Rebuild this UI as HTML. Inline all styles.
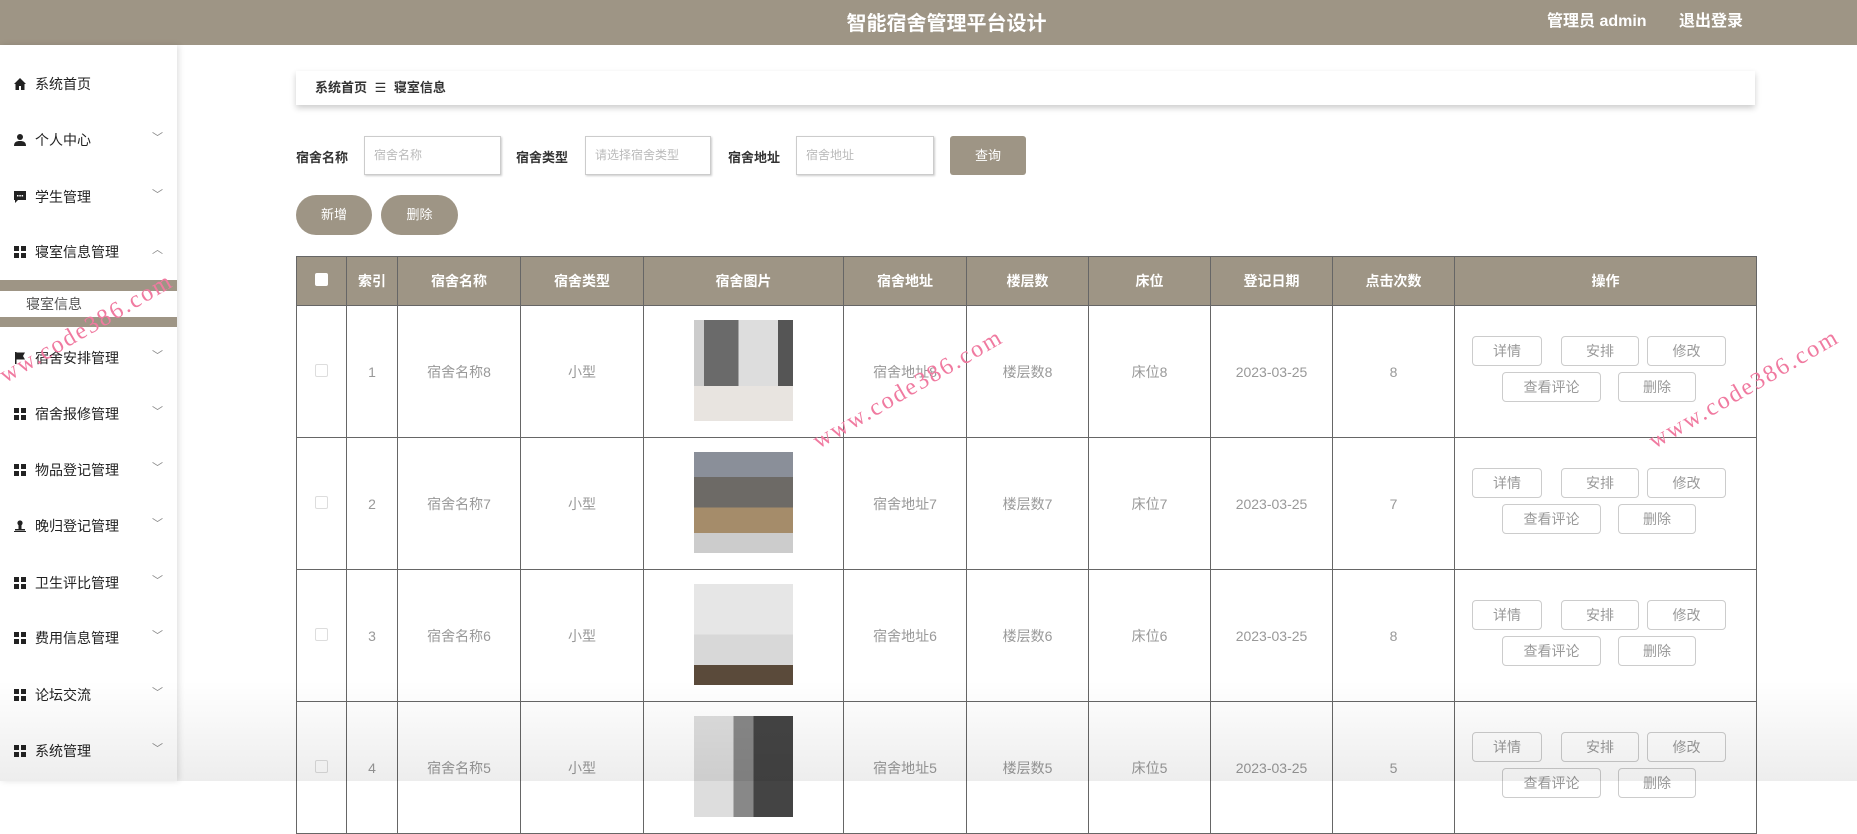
<!DOCTYPE html>
<html><head><meta charset="utf-8">
<style>
*{box-sizing:border-box;margin:0;padding:0}
body{width:1857px;height:781px;overflow:hidden;background:#fff;font-family:"Liberation Sans","Noto Sans CJK SC",sans-serif;position:relative;color:#333}
.hdr{position:absolute;left:0;top:0;width:1857px;height:45px;background:#9e9585;color:#fff}
.hdr .t{position:absolute;left:18px;width:1857px;top:7px;text-align:center;font-size:20px;font-weight:bold}
.hdr .u{position:absolute;top:7px;font-size:16px;font-weight:bold}
.side{position:absolute;left:0;top:45px;width:177px;height:736px;background:#fff;box-shadow:2px 0 6px rgba(0,0,0,.12)}
.mi{position:absolute;left:0;width:177px;height:30px;font-size:14px;color:#222;line-height:30px}
.mi .ic{position:absolute;left:14px;top:9px;width:12px;height:12px}
.mi .tx{position:absolute;left:35px}
.mi .ar{position:absolute;left:152px;top:-2px;color:#888;font-size:11px}
.grid{background:
linear-gradient(#222,#222) 0 0/5px 5px no-repeat,linear-gradient(#222,#222) 7px 0/5px 5px no-repeat,
linear-gradient(#222,#222) 0 7px/5px 5px no-repeat,linear-gradient(#222,#222) 7px 7px/5px 5px no-repeat}
.bc{position:absolute;left:296px;top:71px;width:1459px;height:34px;background:#fff;box-shadow:0 3px 6px rgba(0,0,0,.2);font-size:13px;font-weight:bold;line-height:34px;padding-left:19px}
.lbl{position:absolute;top:147px;font-size:13px;font-weight:bold;color:#333}
.inp{position:absolute;top:136px;height:39px;border:1px solid #ccc;box-shadow:1px 1px 2px rgba(0,0,0,.2);font-size:12px;color:#bbb;line-height:37px;padding-left:9px}
.btn{position:absolute;background:#9e9585;color:#fff;font-size:13px;text-align:center}
table{position:absolute;left:296px;top:256px;border-collapse:collapse;table-layout:fixed;width:1460px}
td,th{border:1px solid #666;text-align:center;font-size:14px;color:#999;font-weight:normal}
th{background:#9e9585;color:#fff;font-weight:bold;height:49px}
td{height:132px;vertical-align:middle;position:relative}
.cb{display:inline-block;width:13px;height:13px;border:1px solid #ddd;border-radius:2px;background:#fff}
.img{display:inline-block;width:99px;height:101px}
.ab{position:absolute;border:1px solid #ccc;border-radius:4px;height:30px;line-height:28px;font-size:14px;color:#999;background:#fff}
.wm{position:absolute;color:#f07aa0;font-family:"Liberation Serif",serif;font-size:24px;letter-spacing:2px;transform:rotate(-30deg);transform-origin:left bottom;white-space:nowrap}
.fade{position:absolute;left:0;top:680px;width:1857px;height:101px;background:linear-gradient(rgba(0,0,0,0),rgba(0,0,0,.07));pointer-events:none}
</style></head><body>
<div class="hdr"><div class="t">智能宿舍管理平台设计</div><div class="u" style="left:1547px">管理员 admin</div><div class="u" style="left:1679px">退出登录</div></div>

<div class="side">
<div class="mi" style="top:24px"><svg class="ic" viewBox="0 0 12 12"><path d="M6 0L0 6h1.5v6h3.5V8h2v4h3.5V6H12z" fill="#222"/></svg><span class="tx">系统首页</span></div>
<div class="mi" style="top:80px"><svg class="ic" viewBox="0 0 12 12"><circle cx="6" cy="3" r="3" fill="#222"/><path d="M0 12c0-4 2.5-5 6-5s6 1 6 5z" fill="#222"/></svg><span class="tx">个人中心</span><span class="ar">﹀</span></div>
<div class="mi" style="top:137px"><svg class="ic" viewBox="0 0 12 12"><path d="M0 0h12v9H4l-3 3V9H0z" fill="#222"/><rect x="3" y="4" width="1.5" height="1.5" fill="#fff"/><rect x="5.3" y="4" width="1.5" height="1.5" fill="#fff"/><rect x="7.6" y="4" width="1.5" height="1.5" fill="#fff"/></svg><span class="tx">学生管理</span><span class="ar">﹀</span></div>
<div class="mi" style="top:192px"><span class="ic grid"></span><span class="tx">寝室信息管理</span><span class="ar">︿</span></div>
<div style="position:absolute;top:235px;left:0;width:177px;height:11px;background:#9e9585"></div>
<div style="position:absolute;top:246px;left:0;width:177px;height:26px;font-size:14px;color:#555;line-height:26px;padding-left:26px">寝室信息</div>
<div style="position:absolute;top:272px;left:0;width:177px;height:10px;background:#9e9585"></div>
<div class="mi" style="top:298px"><svg class="ic" viewBox="0 0 12 12"><path d="M1 0h1.5v12H1zM2.5 0.5H11L9 4l2 3.5H2.5z" fill="#222"/></svg><span class="tx">宿舍安排管理</span><span class="ar">﹀</span></div>
<div class="mi" style="top:354px"><span class="ic grid"></span><span class="tx">宿舍报修管理</span><span class="ar">﹀</span></div>
<div class="mi" style="top:410px"><span class="ic grid"></span><span class="tx">物品登记管理</span><span class="ar">﹀</span></div>
<div class="mi" style="top:466px"><svg class="ic" viewBox="0 0 12 12"><circle cx="6" cy="3" r="2.6" fill="#222"/><path d="M4.5 5h3v4h-3z M1 9h10v1.5H1z M0 11h12v1H0z" fill="#222"/></svg><span class="tx">晚归登记管理</span><span class="ar">﹀</span></div>
<div class="mi" style="top:523px"><span class="ic grid"></span><span class="tx">卫生评比管理</span><span class="ar">﹀</span></div>
<div class="mi" style="top:578px"><span class="ic grid"></span><span class="tx">费用信息管理</span><span class="ar">﹀</span></div>
<div class="mi" style="top:635px"><span class="ic grid"></span><span class="tx">论坛交流</span><span class="ar">﹀</span></div>
<div class="mi" style="top:691px"><span class="ic grid"></span><span class="tx">系统管理</span><span class="ar">﹀</span></div>
</div>

<div class="bc">系统首页 <span style="font-weight:normal;margin:0 4px">☰</span> 寝室信息</div>

<div class="lbl" style="left:296px">宿舍名称</div>
<div class="inp" style="left:364px;width:137px">宿舍名称</div>
<div class="lbl" style="left:516px">宿舍类型</div>
<div class="inp" style="left:585px;width:126px">请选择宿舍类型</div>
<div class="lbl" style="left:728px">宿舍地址</div>
<div class="inp" style="left:796px;width:138px">宿舍地址</div>
<div class="btn" style="left:950px;top:136px;width:76px;height:39px;line-height:39px;border-radius:3px">查询</div>
<div class="btn" style="left:296px;top:195px;width:76px;height:40px;line-height:40px;border-radius:20px">新增</div>
<div class="btn" style="left:381px;top:195px;width:77px;height:40px;line-height:40px;border-radius:20px">删除</div>

<table>
<colgroup><col style="width:50px"><col style="width:51px"><col style="width:123px"><col style="width:123px"><col style="width:200px"><col style="width:123px"><col style="width:122px"><col style="width:122px"><col style="width:122px"><col style="width:122px"><col style="width:302px"></colgroup>
<tr><th><span class="cb" style="border-color:#fff"></span></th><th>索引</th><th>宿舍名称</th><th>宿舍类型</th><th>宿舍图片</th><th>宿舍地址</th><th>楼层数</th><th>床位</th><th>登记日期</th><th>点击次数</th><th>操作</th></tr>
<tr><td><span class="cb"></span></td><td>1</td><td>宿舍名称8</td><td>小型</td><td><span class="img" style="background:linear-gradient(90deg,#ccc 0 10%,#6a6a6a 10% 45%,#ddd 45% 85%,#555 85%);box-shadow:inset 0 -35px 0 #e8e4e0,inset 0 -12px 0 #7a4b2a"></span></td><td>宿舍地址8</td><td>楼层数8</td><td>床位8</td><td>2023-03-25</td><td>8</td><td class="ops"></td></tr>
<tr><td><span class="cb"></span></td><td>2</td><td>宿舍名称7</td><td>小型</td><td><span class="img" style="background:linear-gradient(180deg,#8a8f99 0 25%,#6d6a66 25% 55%,#a58c6a 55% 80%,#ccc 80%)"></span></td><td>宿舍地址7</td><td>楼层数7</td><td>床位7</td><td>2023-03-25</td><td>7</td><td></td></tr>
<tr><td><span class="cb"></span></td><td>3</td><td>宿舍名称6</td><td>小型</td><td><span class="img" style="background:linear-gradient(180deg,#e6e6e6 0 50%,#d8d8d8 50% 80%,#5a4a3a 80%)"></span></td><td>宿舍地址6</td><td>楼层数6</td><td>床位6</td><td>2023-03-25</td><td>8</td><td></td></tr>
<tr><td><span class="cb"></span></td><td>4</td><td>宿舍名称5</td><td>小型</td><td><span class="img" style="background:linear-gradient(90deg,#ddd 0 40%,#888 40% 60%,#444 60%)"></span></td><td>宿舍地址5</td><td>楼层数5</td><td>床位5</td><td>2023-03-25</td><td>5</td><td></td></tr>
</table>

<div id="acts"></div>
<script>
var tops=[305,437,569,701],h='';
tops.forEach(function(t){
[[1472,70,'详情',31],[1561,78,'安排',31],[1647,79,'修改',31],[1502,99,'查看评论',67],[1618,78,'删除',67]].forEach(function(b){
h+='<div class="ab" style="left:'+b[0]+'px;width:'+b[1]+'px;top:'+(t+b[3])+'px;text-align:center">'+b[2]+'</div>';});});
document.getElementById('acts').innerHTML=h;
</script>

<div class="wm" style="left:-8px;top:372px">www.code386.com</div>
<div class="wm" style="left:822px;top:428px">www.code386.com</div>
<div class="wm" style="left:1658px;top:428px">www.code386.com</div>
<div class="fade"></div>
</body></html>
